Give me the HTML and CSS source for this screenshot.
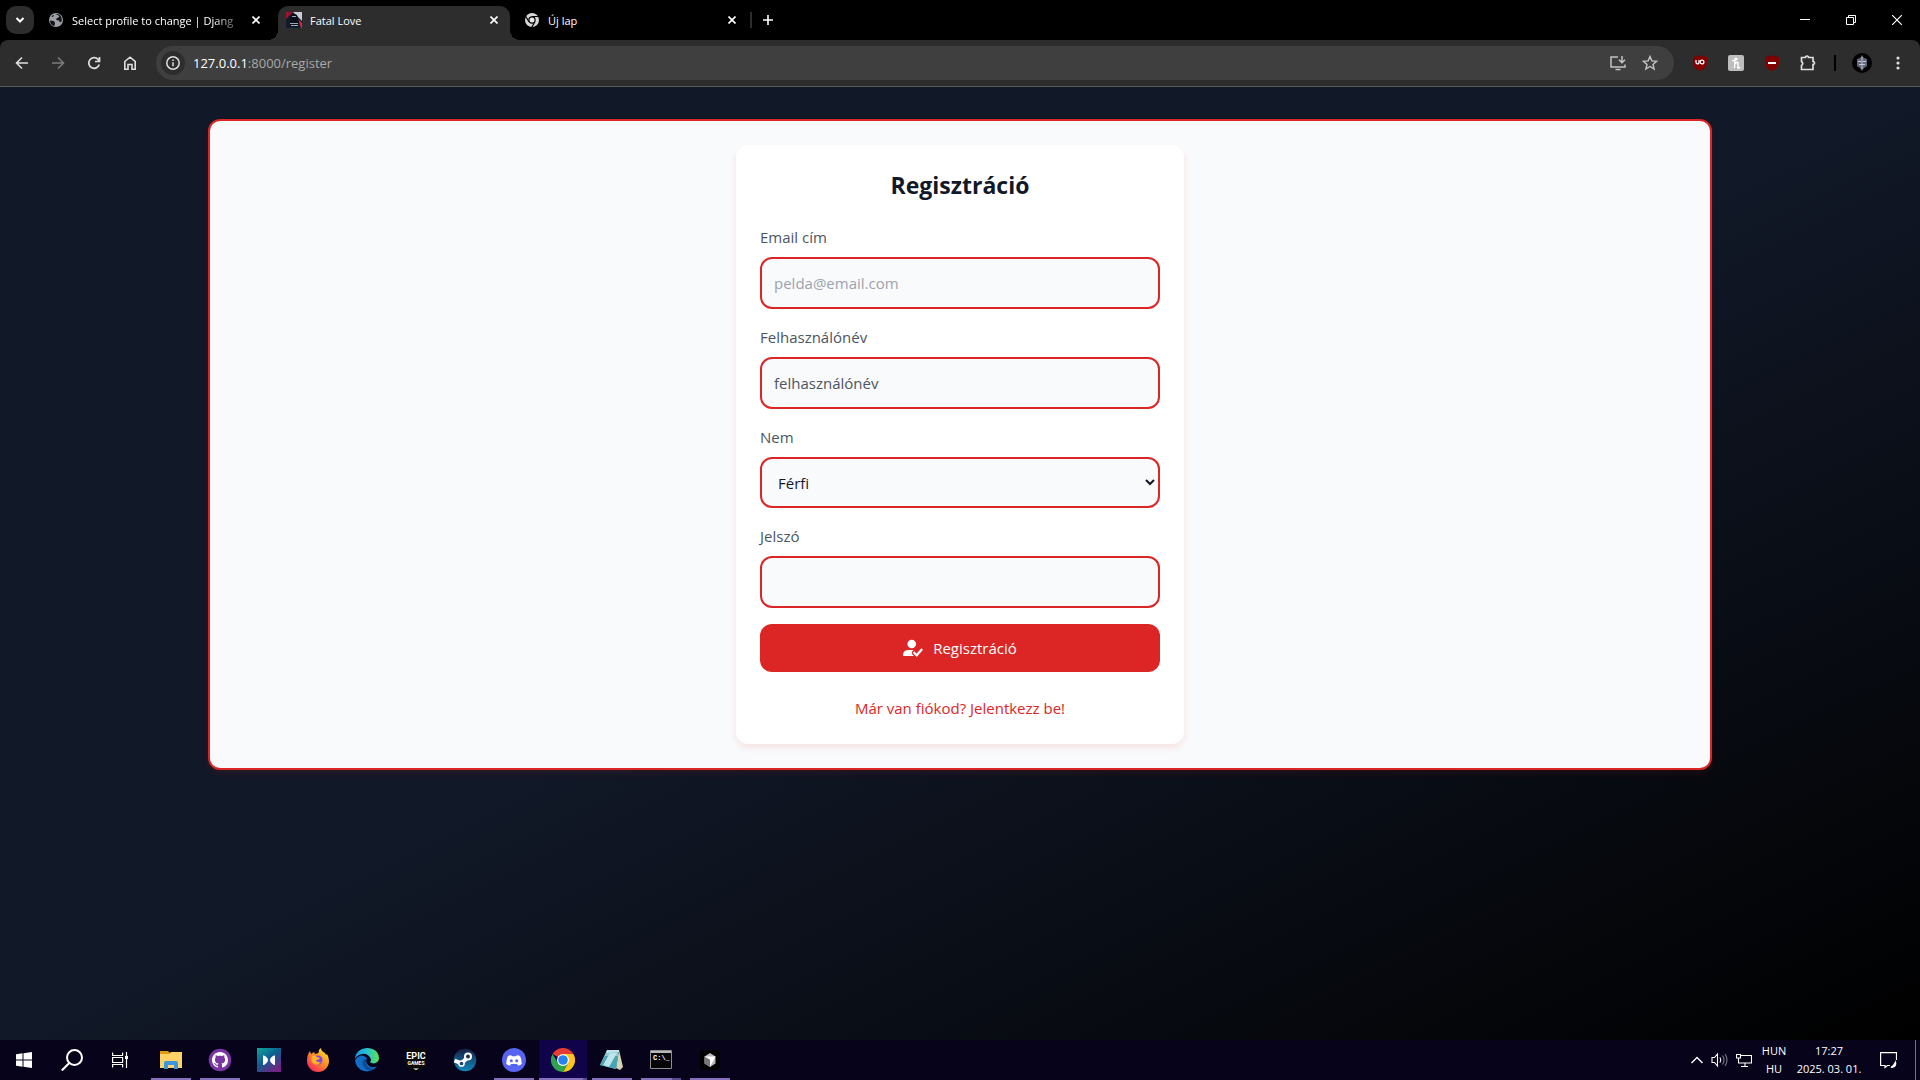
FILE: index.html
```html
<!DOCTYPE html>
<html lang="hu">
<head>
<meta charset="utf-8">
<meta name="viewport" content="width=device-width, initial-scale=1">
<title>Fatal Love</title>
<link rel="stylesheet" href="styles.css">
</head>
<body>
<header class="browser">
  <div class="tabstrip">
    <button class="tab-search" aria-label="Lapok keresése"><svg width="28" height="28" viewBox="0 0 28 28" fill="none" stroke="#fff" stroke-width="2"><path d="M10.500 12l3.500 3.500 3.500-3.500"/></svg></button>
    <div class="tab">
      <svg class="favicon" width="16" height="16" viewBox="0 0 16 16"><circle cx="8" cy="8" r="7" fill="#9aa0a6"/><path fill="#111" d="M2 8.500 5.500 9l1.500 1.500L6.500 14Q2 13 2 8.500zM7 2l3 1 1.500 2-2.500 1-1 2 3 .500 1 2 1.500-1Q14.500 3 9.500 2zM3.500 4.500 5 5l1-1.500L5 3z"/></svg>
      <span class="tab-title fade">Select profile to change | Djang</span>
      <button class="tab-close" aria-label="Bezárás"><svg width="8" height="8" viewBox="0 0 8 8" stroke="#fff" stroke-width="1.600"><path d="m.5.5 7 7m0-7-7 7"/></svg></button>
    </div>
    <div class="tab active">
      <svg class="favicon" width="16" height="16" viewBox="0 0 16 16"><path fill="#101b2c" d="M0 0h16v16H0z"/><path fill="#a3102c" d="M0 0h7L0 7z"/><path fill="#c9cdd6" d="M7 0h9v9z"/><path fill="#d52943" d="m12 7 4 4v5h-1z"/><path fill="#0b0f18" d="M5 3q3-2 6 0l2 7-1 4H4V8z"/><path stroke="#9ea6b8" d="M6 4.500h4M4 11.500h8M5 13.500h7"/></svg>
      <span class="tab-title">Fatal Love</span>
      <button class="tab-close" aria-label="Bezárás"><svg width="8" height="8" viewBox="0 0 8 8" stroke="#fff" stroke-width="1.600"><path d="m.5.5 7 7m0-7-7 7"/></svg></button>
    </div>
    <div class="tab">
      <svg class="favicon" width="16" height="16" viewBox="0 0 16 16"><circle cx="8" cy="8" r="7" fill="#d8d8d8"/><circle cx="8" cy="8" r="3.700" fill="#000"/><circle cx="8" cy="8" r="2.500" fill="#e8e8e8"/><path stroke="#000" stroke-width="1.200" d="M8 4.500h7M4.900 9.700 1.500 4M11 9.800 7.600 15.500"/></svg>
      <span class="tab-title">Új lap</span>
      <button class="tab-close" aria-label="Bezárás"><svg width="8" height="8" viewBox="0 0 8 8" stroke="#fff" stroke-width="1.600"><path d="m.5.5 7 7m0-7-7 7"/></svg></button>
    </div>
    <button class="new-tab" aria-label="Új lap megnyitása"><svg width="10" height="10" viewBox="0 0 10 10" stroke="#fff" stroke-width="1.600"><path d="M5 0v10M0 5h10"/></svg></button>
    <div class="window-buttons">
      <button aria-label="Kis méret"><svg width="10" height="10" viewBox="0 0 10 10" stroke="#fff"><path d="M0 4.500h10"/></svg></button>
      <button aria-label="Előző méret"><svg width="10" height="10" viewBox="0 0 10 10" fill="none" stroke="#fff"><path d="M.5 2.500h7v7h-7zM2.500 2.500v-2h7v7h-2"/></svg></button>
      <button aria-label="Ablak bezárása"><svg width="10" height="10" viewBox="0 0 10 10" stroke="#fff" stroke-width="1.200"><path d="m0 0 10 10M10 0 0 10"/></svg></button>
    </div>
  </div>
  <div class="toolbar">
    <div class="nav-buttons">
      <button aria-label="Vissza"><svg width="16" height="16" viewBox="0 0 16 16" fill="none" stroke="#dedede" stroke-width="1.600"><path d="M14 8H3M8 2.500 2.500 8 8 13.500"/></svg></button>
      <button aria-label="Előre"><svg width="16" height="16" viewBox="0 0 16 16" fill="none" stroke="#7b7b7b" stroke-width="1.600"><path d="M2 8h11M8 2.500 13.500 8 8 13.500"/></svg></button>
      <button aria-label="Újratöltés"><svg width="16" height="16" viewBox="0 0 16 16" fill="none" stroke="#dedede" stroke-width="1.700"><path d="M13.200 9.500A5.300 5.300 0 1 1 12 4.400l1.500 1.700M13.500 2v4.500H9"/></svg></button>
      <button aria-label="Kezdőlap"><svg width="16" height="16" viewBox="0 0 16 16" fill="none" stroke="#dedede" stroke-width="1.600"><path d="M2.800 6.500 8 2.200l5.200 4.300v7.700H10V9.500H6v4.700H2.800z"/></svg></button>
    </div>
    <div class="omnibox">
      <button class="site-info" aria-label="Webhelyinformációk"><svg width="16" height="16" viewBox="0 0 16 16" fill="none" stroke="#dedede" stroke-width="1.500"><circle cx="8" cy="8" r="6.200"/><path d="M8 7.200v4M8 4.500v1.600"/></svg></button>
      <span class="url"><b>127.0.0.1</b>:8000/register</span>
      <button aria-label="Telepítés"><svg width="18" height="18" viewBox="0 0 18 18" fill="none" stroke="#c4c4c4" stroke-width="1.500"><path d="M9 3H2v10h14v-2.500M13 2v6M10 5.800 13 8.800l3-3M6.500 15.500h5"/></svg></button>
      <button aria-label="Könyvjelző"><svg width="18" height="18" viewBox="0 0 18 18" fill="none" stroke="#c4c4c4" stroke-width="1.400"><path d="m9 2.600 1.900 4.300 4.700.4-3.600 3.100 1.100 4.600L9 12.500 4.900 15 6 10.400 2.400 7.300l4.700-.4z"/></svg></button>
    </div>
    <div class="extensions">
      <button aria-label="uBlock"><svg width="16" height="16" viewBox="0 0 16 16"><path fill="#800000" d="M8 0q3 2 7 2v6q0 5-7 8-7-3-7-8V2q4 0 7-2z"/><path fill="none" stroke="#fff" stroke-width="1.300" d="M4 5v2.300q0 1.600 1.500 1.600T7 7.300V5"/><circle cx="10" cy="7" r="1.900" fill="none" stroke="#fff" stroke-width="1.300"/></svg></button>
      <button aria-label="Honey"><svg width="16" height="16" viewBox="0 0 16 16"><rect width="16" height="16" rx="2" fill="#bdbdbd"/><path fill="none" stroke="#fff" stroke-width="1.400" d="M4 5.500q3 .5 4.500-1T7 3.500L6.500 13M6.700 9q3-3 3.300-1t-.3 4.500q1 1.500 2.300-.5"/></svg></button>
      <button aria-label="Reklámszűrő"><svg width="16" height="16" viewBox="0 0 16 16"><path fill="#800000" d="M8 0q3 2 7 2v6q0 5-7 8-7-3-7-8V2q4 0 7-2z"/><path fill="#fff" d="M4 7h8v2H4z"/></svg></button>
      <button aria-label="Bővítmények"><svg width="18" height="18" viewBox="0 0 18 18" fill="none" stroke="#dedede" stroke-width="1.700"><path d="M2.500 3.500h4V2.800q1.500-1.600 3 0v.7h4.500v4h.7q1.600 1.500 0 3H14v5H2.500v-4q2.500-2 0-4z"/></svg></button>
      <span class="divider"></span>
      <button aria-label="Profil"><svg width="20" height="20" viewBox="0 0 20 20"><circle cx="10" cy="10" r="10" fill="#000"/><path fill="#606578" d="m10 2 2 3 3 1v7l-3 2-2 3-2-3-3-2V6l3-1z"/><path stroke="#c3c8dc" d="M10 4v12M6 8.500h3m2 0h3M7 11.500h6"/></svg></button>
      <button aria-label="Menü"><svg width="16" height="16" viewBox="0 0 16 16" fill="#dedede"><circle cx="8" cy="3" r="1.600"/><circle cx="8" cy="8" r="1.600"/><circle cx="8" cy="13" r="1.600"/></svg></button>
    </div>
  </div>
</header>

<main class="page">
  <section class="panel">
    <div class="card">
      <h1>Regisztráció</h1>
      <form class="form">
        <div class="field"><label for="email">Email cím</label><input id="email" type="email" placeholder="pelda@email.com"></div>
        <div class="field"><label for="username">Felhasználónév</label><input id="username" class="dark-hint" type="text" placeholder="felhasználónév"></div>
        <div class="field"><label for="gender">Nem</label><select id="gender"><option>Férfi</option><option>Nő</option></select></div>
        <div class="field"><label for="password">Jelszó</label><input id="password" type="password"></div>
        <button class="submit" type="submit"><svg width="20" height="20" viewBox="0 0 20 20"><circle cx="8.700" cy="6" r="4.300" fill="#fff"/><path fill="#fff" d="M0 18v-1q0-5 6-5h3.500q.5 0 .9.200L8.500 14l3.200 4z"/><path fill="none" stroke="#dc2626" stroke-width="5" d="m10.500 14 3.200 3.300 5.500-6.300"/><path fill="none" stroke="#fff" stroke-width="2.200" d="m10.500 14 3.200 3.300 5.500-6.300"/></svg>Regisztráció</button>
      </form>
      <a class="login" href="#">Már van fiókod? Jelentkezz be!</a>
    </div>
  </section>
</main>

<footer class="taskbar">
  <nav class="system">
    <button aria-label="Start"><svg width="16" height="16" viewBox="0 0 16 16" fill="#fff"><path d="m0 2.300 6.500-1v6.200H0zM7.500 1.200 16 0v7.500H7.500zM0 8.500h6.500v6.200l-6.500-1zM7.500 8.500H16V16l-8.500-1.200z"/></svg></button>
    <button aria-label="Keresés"><svg width="22" height="22" viewBox="0 0 22 22" fill="none" stroke="#fff" stroke-width="2"><circle cx="13.500" cy="8.500" r="7.500"/><path d="M8.300 14 .8 21.500"/></svg></button>
    <button aria-label="Feladatnézet"><svg width="16" height="16" viewBox="0 0 16 16" fill="none" stroke="#fff" stroke-width="1.200"><path d="M.6.500v3h10v-3M.6 5.500h10v5H.6zM.6 15.500v-3h10v3M14.500 0v16"/><path fill="#fff" stroke="none" d="M13 4h3v3h-3z"/></svg></button>
  </nav>
  <nav class="apps">
    <button class="open" aria-label="Fájlkezelő"><svg width="24" height="24" viewBox="0 0 24 24"><path fill="#e09b16" d="M1 3h8l2 2v4H1z"/><path fill="#ffd466" d="M1 6h9l2-2h11v16H1z"/><path fill="#3e97dc" d="M5 21v-6q0-2 2-2h10q2 0 2 2v6h-4v-4H9v4z"/></svg></button>
    <button class="open" aria-label="GitHub Desktop"><svg width="24" height="24" viewBox="-4 -4 24 24"><circle cx="8" cy="8" r="11.300" fill="#7a35a0"/><path fill="#fff" d="M8 0C3.580 0 0 3.580 0 8c0 3.540 2.290 6.530 5.470 7.590.4.070.55-.17.55-.38 0-.19-.01-.82-.01-1.490-2.010.37-2.530-.49-2.690-.94-.09-.23-.48-.94-.82-1.130-.28-.15-.68-.52-.01-.53.63-.01 1.080.58 1.230.82.72 1.210 1.870.87 2.330.66.07-.52.28-.87.51-1.070-1.780-.2-3.640-.89-3.640-3.950 0-.87.31-1.590.82-2.150-.08-.2-.36-1.020.08-2.120 0 0 .67-.21 2.200.82.64-.18 1.320-.27 2-.27s1.360.09 2 .27c1.530-1.040 2.200-.82 2.200-.82.44 1.100.16 1.920.08 2.120.51.56.82 1.270.82 2.150 0 3.070-1.870 3.750-3.650 3.950.29.25.54.73.54 1.480 0 1.070-.01 1.930-.01 2.200 0 .21.15.46.55.38A8.010 8.010 0 0 0 16 8c0-4.420-3.580-8-8-8"/></svg></button>
    <button aria-label="Videó"><svg width="24" height="24" viewBox="0 0 24 24"><defs><linearGradient id="vid" x2=".7" y2="1"><stop stop-color="#0fa79b"/><stop offset=".5" stop-color="#0c5f91"/><stop offset="1" stop-color="#732381"/></linearGradient></defs><path fill="url(#vid)" d="M0 0h24v24H0z"/><path fill="#fff" d="M6 7.500h1q4 2 4 4.500t-4 5H6zM18 7.500h-1q-4 2-4 4.500t4 5h1z"/></svg></button>
    <button aria-label="Firefox"><svg width="24" height="24" viewBox="0 0 24 24"><defs><linearGradient id="fox" x1="1" x2=".2" y2="1"><stop stop-color="#fff14d"/><stop offset=".45" stop-color="#ff9a1f"/><stop offset="1" stop-color="#f5205e"/></linearGradient></defs><path fill="url(#fox)" d="M1 13Q1 7 4 3l1 3 3-2 1 2q3 0 4-2-1-2 2-4 0 3 4 5l1 2 1-1q2 3 2 7a11 11 0 0 1-22 0z"/><circle cx="12" cy="12" r="4.500" fill="#8047e5"/><path fill="#ffb225" d="M6 8q3-1 5 1l3 1q-1 2-4 2 1 3 5 2-3 4-7 2-4-2-2-8z"/></svg></button>
    <button aria-label="Edge"><svg width="24" height="24" viewBox="0 0 24 24"><defs><linearGradient id="edg" x2="1"><stop stop-color="#1998dc"/><stop offset=".5" stop-color="#27bfd5"/><stop offset="1" stop-color="#5de34d"/></linearGradient></defs><path fill="#106cc5" d="M0 12a12 12 0 0 0 22 6q-6 3-9-1-3-3-1-7-6-6-12 2z"/><path fill="url(#edg)" d="M0 11C1-4 24-3 24 10c0 5-6 7-9 4q2-2 0-4.500Q12 5 7 6q-5 1-7 5z"/><path fill="#0c4b91" d="M12 10q-6 2-4 7 3 8 12 4-8 0-9-6-.5-2 1-5z"/></svg></button>
    <button aria-label="Epic Games"><svg class="epic" width="22" height="24" viewBox="0 0 22 24"><path fill="#0b0b0b" d="M1 0h20v19l-10 5-10-5z"/><path fill="#fff" d="M8 20.500h6l-3 1.500z"/><text x="11" y="11" text-anchor="middle">EPIC</text><text class="sub" x="11" y="17" text-anchor="middle">GAMES</text></svg></button>
    <button aria-label="Steam"><svg width="24" height="24" viewBox="0 0 24 24"><defs><linearGradient id="stm" x2="0" y2="1"><stop stop-color="#172043"/><stop offset="1" stop-color="#1489bc"/></linearGradient></defs><circle cx="12" cy="12" r="11.300" fill="url(#stm)"/><path fill="none" stroke="#fff" stroke-width="4" d="m1.500 12.500 7 3 6-6"/><circle cx="8.500" cy="15.500" r="2.600" fill="#1b476f" stroke="#fff" stroke-width="1.500"/><circle cx="15" cy="8.500" r="3" fill="#1b2f55" stroke="#fff" stroke-width="2"/></svg></button>
    <button class="open" aria-label="Discord"><svg width="24" height="24" viewBox="0 0 24 24"><circle cx="12" cy="12" r="12" fill="#5865f2"/><path fill="#fff" d="m9 7-3 1q-2 4-1.700 8 2 1.500 3.700 1.600l1-1.600h6l1 1.600q1.700-.1 3.700-1.600.3-4-1.700-8l-3-1-.7 1.200H9.700z"/><circle cx="9.300" cy="12.700" r="1.500" fill="#5865f2"/><circle cx="14.700" cy="12.700" r="1.500" fill="#5865f2"/></svg></button>
    <button class="open current" aria-label="Chrome"><svg width="24" height="24" viewBox="0 0 24 24"><path fill="#e53b30" d="M12 12 1.600 6a12 12 0 0 1 20.800 0z"/><path fill="#fbc31c" d="M12 6h10.400A12 12 0 0 1 12 24l5-9z"/><path fill="#2ea44f" d="M1.600 6A12 12 0 0 0 12 24l5.200-9H7z"/><circle cx="12" cy="12" r="6" fill="#fff"/><circle cx="12" cy="12" r="4.800" fill="#2783eb"/></svg></button>
    <button class="open" aria-label="Jegyzettömb"><svg width="24" height="24" viewBox="0 0 24 24"><path fill="#d7d4b6" d="m19 2 4 17-3 3-4-2z"/><path fill="#8bcbd8" d="M7 2h12l-3 19-16-4z"/><path fill="#49a4b6" d="m5 8 13 0-2 13-16-4z"/><path fill="#bce4e9" d="M7 2h12v2L6 5zM10 5l7 0-8 14-6-2z"/></svg></button>
    <button class="open stacked" aria-label="Parancssor"><svg class="cmd" width="24" height="20" viewBox="0 0 24 20"><path fill="#050505" stroke="#8d8d8d" d="M1.500.5h21v18h-21z"/><path fill="#b8b8b8" d="M2 1h20v2H2z"/><text x="4" y="10">C:\_</text></svg></button>
    <button class="open" aria-label="Cursor"><svg width="20" height="20" viewBox="0 0 20 20"><rect width="20" height="20" rx="4" fill="#000"/><path fill="#b9b9b9" d="m10 3 5.500 3.500v7L10 17l-5.500-3.500v-7z"/><path fill="#777" d="m4.500 6.500 5.500 3v7.500l-5.500-3.500z"/><path fill="#fff" d="M4.500 6.500h11L10 17V9.500z"/></svg></button>
  </nav>
  <div class="tray">
    <svg width="12" height="8" viewBox="0 0 12 8" fill="none" stroke="#fff" stroke-width="1.400"><path d="m.5 7 5.500-5.500L11.500 7"/></svg>
    <svg width="17" height="16" viewBox="0 0 17 16" fill="none" stroke="#fff" stroke-width="1.100"><path d="M1 5.500h2.500l3-3.500v12l-3-3.500H1zM9 5.500q1.500 2.500 0 5"/><path stroke="#79758a" d="M11.500 3.500q3 4.500 0 9M14 2q4 6 0 12"/></svg>
    <svg width="16" height="16" viewBox="0 0 16 16" fill="none" stroke="#fff" stroke-width="1.100"><path d="M5 3.500h10.500v7.500H2.500V6.500M.5 2.500h4v3.500h-4zM9 11v3M5 14.500h7"/></svg>
    <span class="lang">HUN<br>HU</span>
    <span class="clock">17:27<br>2025. 03. 01.</span>
    <svg class="notice" width="17" height="17" viewBox="0 0 17 17" fill="none" stroke="#fff" stroke-width="1.200"><path d="M10 13.500H7.500L5 15.500v-2H.6V.6h15.900V8"/><path fill="#fff" d="M15.500 10q1.500 5-4.500 5.500 3-2 4.500-5.500z"/></svg>
    <button class="show-desktop" aria-label="Asztal megjelenítése"></button>
  </div>
</footer>
</body>
</html>
```
FILE: styles.css
```css
* { box-sizing: border-box; }

body {
  margin: 0;
  min-height: 100vh;
  display: flex;
  flex-direction: column;
  background: #000;
  font-family: "Open Sans", "Noto Sans", sans-serif;
}

button {
  border: 0;
  padding: 0;
  background: none;
  color: inherit;
  font: inherit;
  display: flex;
  align-items: center;
  justify-content: center;
}

svg { flex: none; display: block; }

/* Browser frame */
.tabstrip {
  display: flex;
  height: 40px;
  padding-left: 6px;
  background: #000;
  color: #fff;
  font-size: 11px;
}

.tab-search {
  width: 28px;
  height: 28px;
  margin: 6px 4px 0 0;
  border-radius: 10px;
  background: #2d2d2d;
}

.tab {
  position: relative;
  display: flex;
  align-items: center;
  width: 240px;
  height: 34px;
  margin-top: 6px;
  padding: 0 18px 6px 10px;
}

.tab.active {
  width: 232px;
  padding-left: 8px;
  padding-right: 12px;
  border-radius: 10px 10px 0 0;
  background: #2d2d2d;
}

.tab.active::before,
.tab.active::after {
  content: "";
  position: absolute;
  bottom: 0;
  width: 10px;
  height: 10px;
}

.tab.active::before {
  left: -10px;
  background: radial-gradient(circle at 0 0, transparent 10px, #2d2d2d 10px);
}

.tab.active::after {
  right: -10px;
  background: radial-gradient(circle at 100% 0, transparent 10px, #2d2d2d 10px);
}

.tab.active + .tab { padding-left: 14px; padding-right: 14px; }

.tab-title {
  flex: 1;
  margin: 0 8px;
  white-space: nowrap;
}

.tab-title.fade {
  margin-right: 4px;
  mask-image: linear-gradient(to right, #000 80%, transparent);
}

.new-tab {
  width: 34px;
  height: 16px;
  margin-top: 12px;
  border-left: 2px solid #2d2d2d;
}

.window-buttons { display: flex; margin-left: auto; }
.window-buttons button { width: 46px; }

.toolbar {
  display: flex;
  align-items: center;
  gap: 9px;
  height: 47px;
  padding: 0 10px 0 5px;
  border-bottom: 1px solid #5a5a5a;
  border-radius: 8px 8px 0 0;
  background: #2d2d2d;
}

.nav-buttons { display: flex; gap: 2px; }
.nav-buttons button { width: 34px; height: 34px; }

.omnibox {
  flex: 1;
  display: flex;
  align-items: center;
  gap: 14px;
  height: 34px;
  padding: 0 15px 0 5px;
  border-radius: 17px;
  background: #3f3f3f;
  font-size: 13px;
}

.site-info {
  width: 24px;
  height: 24px;
  margin-right: -6px;
  border-radius: 12px;
  background: #2d2d2d;
}

.url { flex: 1; color: #a8a8a8; }
.url b { color: #fff; font-weight: 400; }

.extensions { display: flex; align-items: center; gap: 12px; padding-left: 5px; }
.extensions button { width: 24px; height: 24px; }
.divider { width: 2px; height: 16px; margin: 0 2px; background: #000; }

/* Registration page */
.page {
  flex: 1;
  padding: 32px 16px;
  background: linear-gradient(to bottom right, #111827 50%, #000 100%);
}

.panel {
  max-width: 1504px;
  margin: 0 auto;
  padding: 24px;
  border: 2px solid #dc2626;
  border-radius: 12px;
  background: #f9fafb;
  box-shadow: 0 4px 6px rgba(220, 38, 38, .1);
}

.card {
  max-width: 448px;
  margin: 0 auto;
  padding: 24px;
  border-radius: 12px;
  background: #fff;
  box-shadow: 0 4px 6px rgba(220, 38, 38, .1);
  font-size: 15px;
  line-height: 24px;
}

h1 {
  margin: 0 0 24px;
  color: #111827;
  font-size: 23px;
  line-height: 32px;
  font-weight: 700;
  text-align: center;
}

.form { display: flex; flex-direction: column; gap: 16px; }
.field { display: flex; flex-direction: column; gap: 8px; color: #4b5563; }

.field input,
.field select {
  width: 100%;
  height: 52px;
  padding: 0 12px;
  border: 2px solid #dc2626;
  border-radius: 12px;
  background: #f9fafb;
  color: #111827;
  font: inherit;
}

.field select { height: 51px; }
.field input::placeholder { color: #9ca3af; }
.field .dark-hint::placeholder { color: #4b5563; }

.submit {
  gap: 10px;
  height: 48px;
  border-radius: 12px;
  background: #dc2626;
  color: #fff;
}

.login {
  display: block;
  margin-top: 24px;
  color: #dc2626;
  text-align: center;
  text-decoration: none;
}

/* Taskbar */
.taskbar {
  display: flex;
  height: 40px;
  background: #07031a;
  color: #fff;
}

.system, .apps { display: flex; }
.system button, .apps button { width: 48px; height: 40px; }
.apps { gap: 1px; margin-left: 3px; }
.apps button { position: relative; }

.apps .open::after {
  content: "";
  position: absolute;
  bottom: 0;
  left: 4px;
  width: 40px;
  height: 2px;
  background: #8670bd;
}

.apps .current { background: #110349; }
.apps .current::after { left: 0; width: 48px; background: linear-gradient(to right, #8670bd 44px, #5c4b8d 44px); }
.apps .stacked::after { background: linear-gradient(to right, #8670bd 31px, #5c4b8d 31px); }

.epic { fill: #fff; font: 700 9px "Roboto", sans-serif; }
.epic .sub { font-size: 5px; }
.cmd { fill: #fff; font: 700 7px "Liberation Mono", monospace; }

.tray {
  display: flex;
  align-items: center;
  margin-left: auto;
  gap: 8px;
  font-size: 11px;
  line-height: 18px;
  text-align: center;
}

.clock { width: 66px; white-space: nowrap; }
.lang { width: 28px; }
.notice { margin: 0 10px; }
.show-desktop { width: 5px; height: 40px; border-left: 1px solid #777386; }
```
